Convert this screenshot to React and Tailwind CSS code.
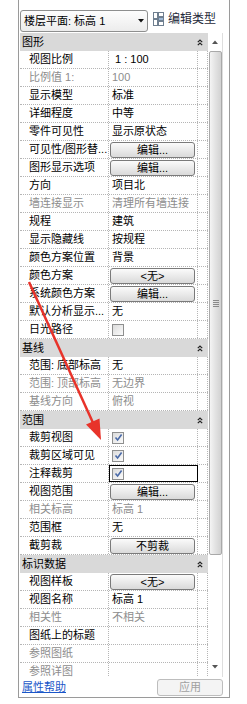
import React from 'react'

const sections = [
  {
    title: '图形',
    rows: [
      { label: '视图比例', value: '\u00a01 : 100' },
      { label: '比例值 1:', value: '100', grey: true },
      { label: '显示模型', value: '标准' },
      { label: '详细程度', value: '中等' },
      { label: '零件可见性', value: '显示原状态' },
      { label: '可见性/图形替...', button: '编辑...' },
      { label: '图形显示选项', button: '编辑...' },
      { label: '方向', value: '项目北' },
      { label: '墙连接显示', value: '清理所有墙连接', grey: true },
      { label: '规程', value: '建筑' },
      { label: '显示隐藏线', value: '按规程' },
      { label: '颜色方案位置', value: '背景' },
      { label: '颜色方案', button: '<无>' },
      { label: '系统颜色方案', button: '编辑...' },
      { label: '默认分析显示...', value: '无' },
      { label: '日光路径', check: false },
    ],
  },
  {
    title: '基线',
    rows: [
      { label: '范围: 底部标高', value: '无' },
      { label: '范围: 顶部标高', value: '无边界', grey: true },
      { label: '基线方向', value: '俯视', grey: true },
    ],
  },
  {
    title: '范围',
    rows: [
      { label: '裁剪视图', check: true },
      { label: '裁剪区域可见', check: true },
      { label: '注释裁剪', check: true, focus: true },
      { label: '视图范围', button: '编辑...' },
      { label: '相关标高', value: '标高 1', grey: true },
      { label: '范围框', value: '无' },
      { label: '截剪裁', button: '不剪裁' },
    ],
  },
  {
    title: '标识数据',
    rows: [
      { label: '视图样板', button: '<无>' },
      { label: '视图名称', value: '标高 1' },
      { label: '相关性', value: '不相关', grey: true },
      { label: '图纸上的标题', value: '' },
      { label: '参照图纸', value: '', grey: true },
      { label: '参照详图', value: '', grey: true },
    ],
  },
]

function Checkbox({ checked }) {
  return (
    <div className="ml-[3px] flex h-[12px] w-[12px] items-center justify-center border border-[#8e8f8f] bg-linear-to-br from-[#dcdcdc] to-[#fbfbfb]">
      {checked && (
        <svg width="9" height="9" viewBox="0 0 9 9">
          <path d="M1.5 4.5 L3.6 7 L7.6 1.5" fill="none" stroke="#4a6aa8" strokeWidth="1.6" />
        </svg>
      )}
    </div>
  )
}

function Row({ row }) {
  const tone = row.grey ? 'text-[#8d8d8d]' : 'text-black'
  return (
    <div className="flex h-[18px] border-b border-dotted border-[#b5b5b5]">
      <div className={`w-[89px] shrink-0 overflow-hidden whitespace-nowrap border-r border-dotted border-[#b5b5b5] pl-[9px] leading-[17px] ${tone}`}>
        {row.label}
      </div>
      <div
        className={`flex w-[89px] shrink-0 items-center overflow-hidden whitespace-nowrap border-r border-dotted border-[#b5b5b5] ${
          row.focus ? 'outline-1 -outline-offset-1 outline-black' : ''
        }`}
      >
        {row.button && (
          <div className="ml-[1px] h-[16px] w-[85px] rounded-[3px] border border-[#7a7a7a] bg-linear-to-b from-[#fbfbfb] to-[#dadada] text-center leading-[14px] text-black">
            {row.button}
          </div>
        )}
        {row.check !== undefined && <Checkbox checked={row.check} />}
        {row.value !== undefined && <span className={`pl-[3px] leading-[17px] ${tone}`}>{row.value}</span>}
      </div>
      <div className="w-[10px] shrink-0 border-r border-dotted border-[#b5b5b5]" />
    </div>
  )
}

function Section({ section }) {
  return (
    <div>
      <div className="flex h-[18px] items-center justify-between bg-[#d9d9d9] pl-[2px] pr-[5px]">
        <span className="leading-[18px] text-black">{section.title}</span>
        <svg width="6" height="7" viewBox="0 0 6 7">
          <path d="M0.8 3.2 L3 1 L5.2 3.2 M0.8 6.2 L3 4 L5.2 6.2" fill="none" stroke="#222" strokeWidth="1.2" />
        </svg>
      </div>
      {section.rows.map((row) => (
        <Row key={row.label} row={row} />
      ))}
    </div>
  )
}

function EditTypeIcon() {
  return (
    <svg width="11" height="15" viewBox="0 0 11 15">
      <rect x="0.5" y="0.5" width="4" height="6" fill="#fff" stroke="#6f7f90" />
      <rect x="0.5" y="7.5" width="4" height="6" fill="#fff" stroke="#6f7f90" />
      <rect x="5.5" y="0.5" width="5" height="4" fill="#fff" stroke="#6f7f90" />
      <rect x="5.5" y="5.5" width="5" height="3" fill="#9db8d6" stroke="#6f7f90" />
      <rect x="5.5" y="9.5" width="5" height="4" fill="#fff" stroke="#6f7f90" />
    </svg>
  )
}

function Scrollbar() {
  return (
    <div className="flex w-[15px] shrink-0 flex-col border-r border-[#dedede] bg-white">
      <div className="flex h-[18px] items-center justify-center pr-[1px]">
        <svg width="6" height="4" viewBox="0 0 6 4">
          <path d="M0 4 L3 0.5 L6 4 Z" fill="#555" />
        </svg>
      </div>
      <div className="ml-[1px] flex h-[504px] w-[13px] items-center justify-center rounded-[2px] border border-[#a9a9a9] bg-linear-to-r from-[#f4f4f4] via-[#e2e2e2] to-[#d2d2d2]">
        <div className="flex flex-col gap-[1px]">
          <div className="h-[1px] w-[6px] bg-[#8a8a8a]" />
          <div className="h-[1px] w-[6px] bg-[#8a8a8a]" />
          <div className="h-[1px] w-[6px] bg-[#8a8a8a]" />
          <div className="h-[1px] w-[6px] bg-[#8a8a8a]" />
        </div>
      </div>
      <div className="flex-1" />
      <div className="flex h-[18px] items-center justify-center pb-[2px] pr-[1px]">
        <svg width="6" height="4" viewBox="0 0 6 4">
          <path d="M0 0 L3 3.5 L6 0 Z" fill="#555" />
        </svg>
      </div>
    </div>
  )
}

export default function App() {
  return (
    <div className="relative h-[704px] w-[247px] overflow-hidden bg-white text-[11px] [font-family:'Liberation_Sans','Noto_Sans_CJK_SC',sans-serif]">
      <div className="ml-[18px] flex h-[698px] w-[212px] flex-col border-x border-b border-[#9a9a9a]">
        {/* type selector */}
        <div className="flex h-[33px] shrink-0 items-end pb-[1px]">
          <div className="ml-[1px] flex h-[22px] w-[128px] items-center justify-between rounded-[3px] border border-[#8e8f8f] bg-linear-to-b from-[#fdfdfd] to-[#ececec] pl-[3px] pr-[3px]">
            <span className="text-black">楼层平面: 标高 1</span>
            <svg width="6" height="4" viewBox="0 0 6 4">
              <path d="M0 0 L6 0 L3 3.5 Z" fill="#111" />
            </svg>
          </div>
          <div className="mb-[4px] ml-[5px] flex items-center gap-[4px]">
            <EditTypeIcon />
            <span className="text-[12px] text-[#1f2a3a]">编辑类型</span>
          </div>
        </div>

        {/* property grid */}
        <div className="flex h-[644px] shrink-0 overflow-hidden">
          <div className="w-[189px] shrink-0 pl-[1px]">
            {sections.map((section) => (
              <Section key={section.title} section={section} />
            ))}
          </div>
          <Scrollbar />
          <div className="w-[6px] shrink-0" />
        </div>

        {/* footer */}
        <div className="flex h-[20px] shrink-0 items-center justify-between pl-[3px] pr-[6px]">
          <span className="text-[#1a56c8] underline">属性帮助</span>
          <div className="h-[17px] w-[66px] rounded-[3px] border border-[#bdbdbd] bg-[#f4f4f4] text-center leading-[15px] text-[#a0a0a0]">
            应用
          </div>
        </div>
      </div>

      {/* red annotation arrow */}
      <svg className="pointer-events-none absolute left-0 top-0" width="247" height="704" viewBox="0 0 247 704">
        <line x1="29" y1="282" x2="94" y2="425" stroke="#e8332a" strokeWidth="2.5" />
        <path d="M101 440 L86 424.5 L99.5 418.5 Z" fill="#e8332a" />
      </svg>
    </div>
  )
}
